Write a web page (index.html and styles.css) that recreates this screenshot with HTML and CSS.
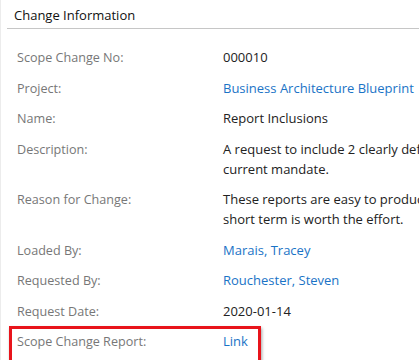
FILE: index.html
```html
<!DOCTYPE html>
<html lang="en">
  <head>
    <meta charset="UTF-8" />
    <title>Change Information</title>
    <link rel="stylesheet" href="styles.css">
  </head>
  <body>
    <section class="panel">
      <h2 class="panel-title">Change Information</h2>

      <div class="fields">
        <div class="field">
          <span class="label">Scope Change No:</span>
          <span class="value">000010</span>
        </div>
        <div class="field">
          <span class="label">Project:</span>
          <a class="value link" href="#">Business Architecture Blueprint</a>
        </div>
        <div class="field">
          <span class="label">Name:</span>
          <span class="value">Report Inclusions</span>
        </div>
        <div class="field">
          <span class="label">Description:</span>
          <span class="value">A request to include 2 clearly defined reports in the current mandate.</span>
        </div>
        <div class="field">
          <span class="label">Reason for Change:</span>
          <span class="value">These reports are easy to produce and the value in the short term is worth the effort.</span>
        </div>
        <div class="field">
          <span class="label">Loaded By:</span>
          <a class="value link" href="#">Marais, Tracey</a>
        </div>
        <div class="field">
          <span class="label">Requested By:</span>
          <a class="value link" href="#">Rouchester, Steven</a>
        </div>
        <div class="field">
          <span class="label">Request Date:</span>
          <span class="value">2020-01-14</span>
        </div>
        <div class="field marked">
          <span class="label">Scope Change Report:</span>
          <a class="value link" href="#">Link</a>
        </div>
      </div>
    </section>
  </body>
</html>
```

FILE: styles.css
```css
* {
  margin: 0;
  padding: 0;
  box-sizing: border-box;
}
body {
  width: 419px;
  height: 360px;
  overflow: hidden;
  background: #fff;
  font-family: "Open Sans", "Noto Sans", sans-serif;
  font-size: 13px;
  color: #222;
}

.panel {
  border-left: 1px solid #ececec;
  min-height: 360px;
}
.panel-title {
  margin-left: 6px;
  padding: 6px 0 0 7px;
  height: 29px;
  font-size: 13px;
  font-weight: 500;
  color: #111;
  border-bottom: 1px solid #c6c6c6;
}

.fields {
  padding: 13px 0 0 16px;
}
.field {
  display: grid;
  grid-template-columns: 206px 345px;
  padding: 5px 0 5.5px;
  line-height: 20px;
}
.label {
  padding-top: 1px;
  margin-bottom: -1px;
  font-size: 12.6px;
  color: #777;
}
.link {
  color: #1a73c6;
  text-decoration: none;
}

/* annotation box around the last row */
.field.marked {
  position: relative;
}
.field.marked::after {
  content: "";
  position: absolute;
  left: -8px;
  top: 0;
  width: 246px;
  height: 32px;
  border: 3px solid #e8141b;
  box-shadow: 1px 2px 3px rgba(0, 0, 0, 0.35);
}
```
